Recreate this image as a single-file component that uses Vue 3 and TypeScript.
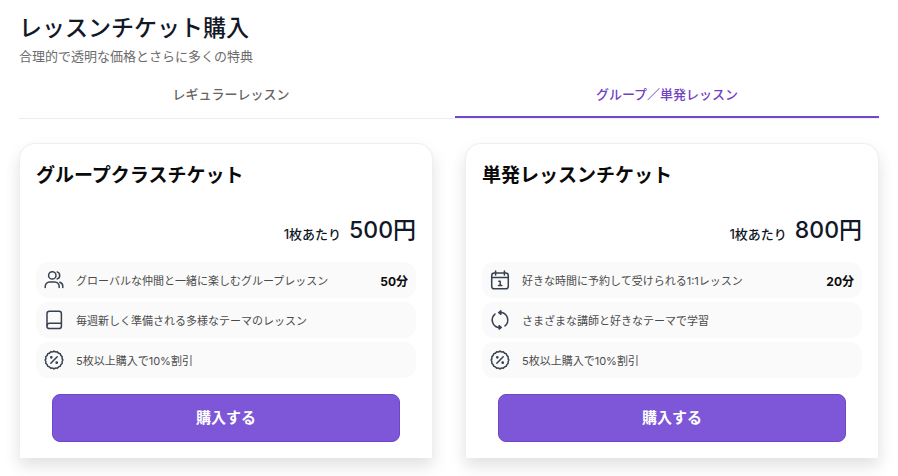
<script setup lang="ts">
import { ref } from 'vue'

type IconName = 'users' | 'book' | 'percent' | 'calendar' | 'refresh'

interface Feature {
  icon: IconName
  text: string
  note?: string
}

interface Ticket {
  title: string
  price: string
  features: Feature[]
}

const tabs: string[] = ['レギュラーレッスン', 'グループ／単発レッスン']
const activeTab = ref<number>(1)

const tickets: Ticket[] = [
  {
    title: 'グループクラスチケット',
    price: '500円',
    features: [
      { icon: 'users', text: 'グローバルな仲間と一緒に楽しむグループレッスン', note: '50分' },
      { icon: 'book', text: '毎週新しく準備される多様なテーマのレッスン' },
      { icon: 'percent', text: '5枚以上購入で10%割引' },
    ],
  },
  {
    title: '単発レッスンチケット',
    price: '800円',
    features: [
      { icon: 'calendar', text: '好きな時間に予約して受けられる1:1レッスン', note: '20分' },
      { icon: 'refresh', text: 'さまざまな講師と好きなテーマで学習' },
      { icon: 'percent', text: '5枚以上購入で10%割引' },
    ],
  },
]
</script>

<template>
  <main class="page">
    <header class="heading">
      <h1>レッスンチケット購入</h1>
      <p>合理的で透明な価格とさらに多くの特典</p>
    </header>

    <div class="tabs" role="tablist">
      <button
        v-for="(tab, i) in tabs"
        :key="tab"
        type="button"
        role="tab"
        class="tab"
        :class="{ active: i === activeTab }"
        :aria-selected="i === activeTab"
        @click="activeTab = i"
      >
        {{ tab }}
      </button>
    </div>

    <div class="cards">
      <section v-for="ticket in tickets" :key="ticket.title" class="card">
        <h2>{{ ticket.title }}</h2>
        <p class="price">
          <span class="unit">1枚あたり</span>
          <strong>{{ ticket.price }}</strong>
        </p>
        <ul class="features">
          <li v-for="f in ticket.features" :key="f.text">
            <svg class="icon" viewBox="0 0 20 20" aria-hidden="true">
              <template v-if="f.icon === 'users'">
                <circle cx="8.3" cy="5.4" r="3.7" />
                <path d="M1.2 17.6v-1.2a4.4 4.4 0 0 1 4.4-4.4h5.2a4.4 4.4 0 0 1 4.4 4.4v1.2" />
                <path d="M13.2 1.9a3.7 3.7 0 0 1 0 7M15.8 12.2a4.2 4.2 0 0 1 3 4.1v1.3" />
              </template>
              <template v-else-if="f.icon === 'book'">
                <rect x="3" y="1.2" width="14.4" height="17.4" rx="2.4" />
                <path d="M3 15.6a2.4 2.4 0 0 1 2.4-2.4h12" />
              </template>
              <template v-else-if="f.icon === 'percent'">
                <path
                  d="M10 1.1Q11.4 2.4 13.4 1.8Q14.3 3.6 16.3 3.7Q16.4 5.7 18.2 6.6Q17.6 8.6 18.9 10Q17.6 11.4 18.2 13.4Q16.4 14.3 16.3 16.3Q14.3 16.4 13.4 18.2Q11.4 17.6 10 18.9Q8.6 17.6 6.6 18.2Q5.7 16.4 3.7 16.3Q3.6 14.3 1.8 13.4Q2.4 11.4 1.1 10Q2.4 8.6 1.8 6.6Q3.6 5.7 3.7 3.7Q5.7 3.6 6.6 1.8Q8.6 2.4 10 1.1Z"
                />
                <path d="M13.2 6.8l-6.4 6.4" />
                <circle class="solid" cx="7.3" cy="7.3" r=".6" />
                <circle class="solid" cx="12.7" cy="12.7" r=".6" />
              </template>
              <template v-else-if="f.icon === 'calendar'">
                <rect x="1.7" y="3" width="16.6" height="15.8" rx="2.6" />
                <path d="M1.7 7.6h16.6M5.6 1v4M14.4 1v4M8.8 11.2h1.4v4.2M8.5 15.4h3.4" />
              </template>
              <template v-else>
                <path d="M8.2 17.5A7.7 7.7 0 0 1 5 4.1M11.8 2.5A7.7 7.7 0 0 1 15 15.9" />
                <path class="solid" d="M10.9.9v3.4L8.7 2.5zM9.1 15.7v3.4l2.2-1.6z" />
              </template>
            </svg>
            <span class="text">{{ f.text }}</span>
            <b v-if="f.note" class="note">{{ f.note }}</b>
          </li>
        </ul>
        <button type="button" class="buy">購入する</button>
      </section>
    </div>
  </main>
</template>

<style>
body {
  background: #fff;
}
</style>

<style scoped>
.page {
  box-sizing: border-box;
  padding: 12px 19px 18px;
  font-family: Inter, 'Noto Sans CJK JP', sans-serif;
  color: #111827;
}

h1,
h2,
p,
ul {
  margin: 0;
  padding: 0;
}

h1 {
  font-size: 23px;
  line-height: 32px;
  font-weight: 500;
}

.heading p {
  font-size: 13px;
  line-height: 24px;
  color: #6b6b6b;
}

.tabs {
  display: flex;
  gap: 12px;
  margin-top: 4px;
  border-bottom: 1px solid #ececec;
}

.tab {
  flex: 1;
  height: 46px;
  padding: 0;
  border: 0;
  border-bottom: 2px solid transparent;
  background: none;
  font: 500 13px/20px Inter, 'Noto Sans CJK JP', sans-serif;
  color: #666;
  cursor: pointer;
}

.tab.active {
  color: #6f42c1;
  border-bottom-color: #7048c8;
}

.cards {
  display: grid;
  grid-template-columns: 1fr 1fr;
  gap: 32px;
  margin-top: 24px;
}

.card {
  display: flex;
  flex-direction: column;
  padding: 16px;
  border: 1px solid #efefef;
  border-bottom: 0;
  border-radius: 16px 16px 0 0;
  background: #fff;
  box-shadow: 0 8px 16px rgba(0, 0, 0, 0.12);
}

h2 {
  font-size: 19px;
  line-height: 32px;
  font-weight: 700;
  color: #0a0a0a;
}

.price {
  display: flex;
  justify-content: flex-end;
  align-items: flex-end;
  gap: 8px;
  margin-top: 22px;
}

.unit {
  font-size: 13px;
  line-height: 24px;
  font-weight: 500;
}

.price strong {
  font-size: 23px;
  line-height: 32px;
  font-weight: 500;
}

.features {
  display: grid;
  gap: 4px;
  margin-top: 16px;
  list-style: none;
}

li {
  display: flex;
  align-items: center;
  height: 36px;
  padding: 0 8px;
  border-radius: 12px;
  background: #fafafa;
}

.icon {
  flex: none;
  width: 20px;
  height: 20px;
  margin-right: 12px;
  fill: none;
  stroke: #374151;
  stroke-width: 1.5;
  stroke-linecap: round;
  stroke-linejoin: round;
}

.solid {
  fill: #374151;
}

.text {
  flex: 1;
  font-size: 11px;
  color: #4b4b4b;
}

.note {
  font-size: 12px;
  color: #0a0a0a;
}

.buy {
  height: 48px;
  margin: 16px 16px 0;
  padding: 0;
  border: 1px solid #7045cc;
  border-radius: 8px;
  background: #7e57d8;
  color: #fff;
  font: 700 15px/20px Inter, 'Noto Sans CJK JP', sans-serif;
  cursor: pointer;
}
</style>
